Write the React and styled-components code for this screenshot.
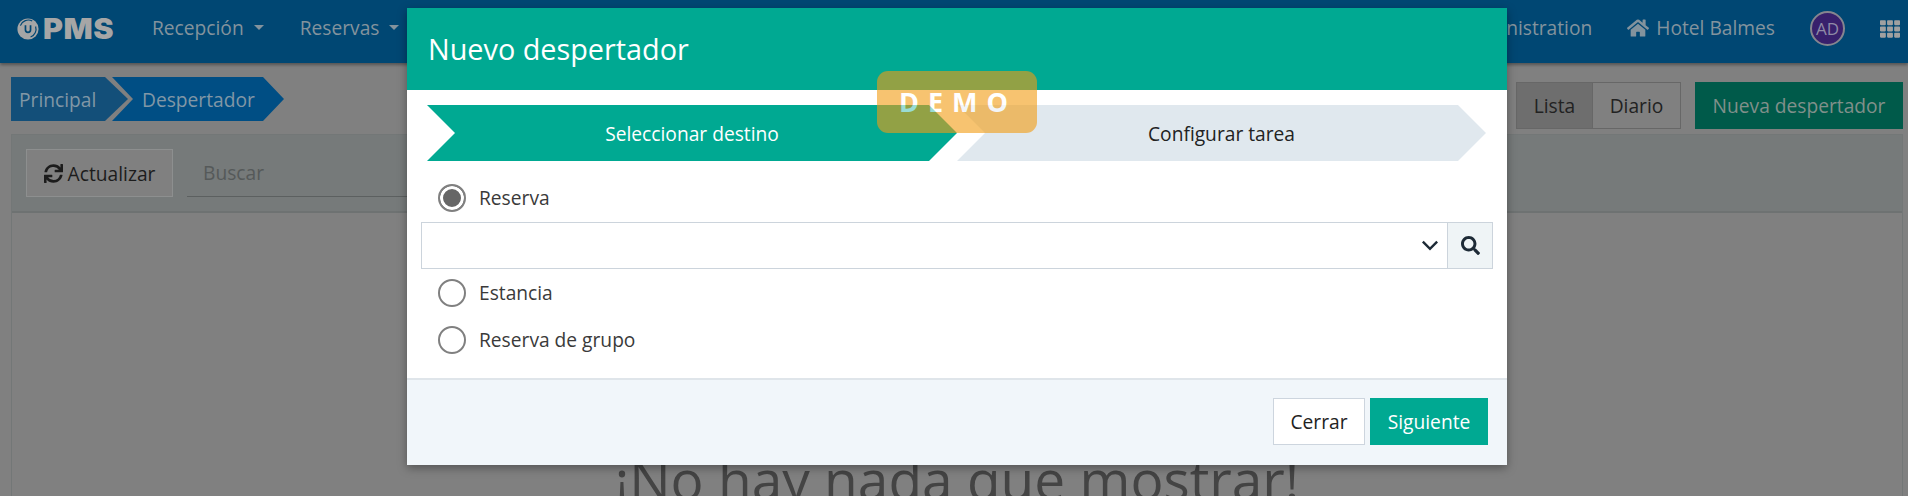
import React from "react";
import styled, { createGlobalStyle } from "styled-components";
import { FaSync, FaHome, FaTh, FaSearch } from "react-icons/fa";

const Global = createGlobalStyle`
  html, body { margin: 0; padding: 0; background: #808080; }
  body { font-family: "Open Sans", "Liberation Sans", sans-serif; font-size: 19.2px; color: #222; }
  * { box-sizing: border-box; }
`;

const Page = styled.div`
  position: relative;
  width: 1908px;
  height: 496px;
  overflow: hidden;
  background: #808080;
`;

const TopBar = styled.header`
  height: 63px;
  background: #004773;
  box-shadow: 0 2px 3px rgba(0, 0, 0, 0.35);
  display: flex;
  align-items: center;
  padding: 0 8px 6px 17px;
  color: #83939d;
`;

const Logo = styled.div`
  display: flex;
  align-items: center;
  gap: 4px;
  width: 135px;
  color: #a6a6a6;
`;

const LogoText = styled.span`
  display: inline-block;
  font-family: "Inter", "Open Sans", sans-serif;
  font-weight: 900;
  font-size: 28px;
  line-height: 1;
  letter-spacing: 0.5px;
  transform: scaleX(1.09);
  transform-origin: left center;
`;

const NavItem = styled.div`
  display: flex;
  align-items: center;
  gap: ${(p) => p.$gap || 10}px;
  margin-right: ${(p) => p.$mr || 0}px;
  margin-left: ${(p) => p.$ml || 0}px;
  margin-bottom: 2px;
`;

const Caret = styled.i`
  width: 0;
  height: 0;
  border-left: 5px solid transparent;
  border-right: 5px solid transparent;
  border-top: 5px solid #83939d;
`;

const Spacer = styled.div`
  flex: 1;
`;

const Avatar = styled.div`
  width: 35px;
  height: 35px;
  border-radius: 50%;
  background: #38206c;
  border: 2px solid #85858f;
  display: flex;
  align-items: center;
  justify-content: center;
  font-size: 17px;
  margin-left: 35px;
  color: #8f8aa6;
`;

const GridIcon = styled(FaTh)`
  width: 20px;
  height: 20px;
  margin-left: 35px;
  color: #a0a0a0;
`;

const Main = styled.main`
  padding: 14px 5px 0 11px;
`;

const HeadRow = styled.div`
  display: flex;
  align-items: flex-start;
  height: 57px;
`;

const Crumbs = styled.nav`
  display: flex;
  height: 44px;
`;

const Crumb = styled.div`
  height: 44px;
  display: flex;
  align-items: center;
  color: #8197a6;
  background: ${(p) => p.$bg};
  width: ${(p) => p.$w}px;
  margin-left: ${(p) => p.$ml || 0}px;
  padding-left: ${(p) => p.$pl}px;
  clip-path: ${(p) => p.$path};
`;

const ViewGroup = styled.div`
  margin: 5px 0 0 auto;
  display: flex;
  align-items: flex-start;
`;

const ViewButton = styled.div`
  height: 47px;
  width: ${(p) => p.$w}px;
  display: flex;
  align-items: center;
  justify-content: center;
  background: ${(p) => (p.$active ? "#6e6e6e" : "#808080")};
  border: 1px solid #676767;
  margin-left: ${(p) => (p.$joined ? "-1px" : "0")};
  color: #222;
`;

const PrimaryDim = styled.div`
  height: 47px;
  width: 208px;
  margin-left: 14px;
  background: #005a4a;
  color: #80908a;
  display: flex;
  align-items: center;
  justify-content: center;
`;

const Panel = styled.section`
  border: 1px solid #737777;
  height: 400px;
`;

const PanelBar = styled.div`
  height: 78px;
  background: #767a7a;
  border-bottom: 2px solid #6e7272;
  display: flex;
  align-items: center;
  padding: 0 15px 0 14px;
  gap: 14px;
`;

const RefreshButton = styled.div`
  width: 147px;
  height: 48px;
  border: 1px solid #8d8f8f;
  background: #808080;
  display: flex;
  align-items: center;
  justify-content: center;
  gap: 5px;
  color: #1c1c1c;
`;

const SearchField = styled.div`
  width: 900px;
  height: 48px;
  border-bottom: 1px solid #5c6060;
  padding-left: 16px;
  display: flex;
  align-items: center;
  color: #555959;
`;

const EmptyTitle = styled.h1`
  margin: 231px 0 0;
  font-weight: 400;
  font-size: 55px;
  line-height: 70px;
  text-align: center;
  color: #444;
`;

const Modal = styled.div`
  position: absolute;
  left: 407px;
  top: 8px;
  width: 1100px;
  height: 457px;
  background: #fff;
  box-shadow: 0 3px 9px rgba(0, 0, 0, 0.35);
  display: flex;
  flex-direction: column;
`;

const ModalHeader = styled.div`
  height: 82px;
  background: #00a992;
  color: #fff;
  font-size: 28.8px;
  display: flex;
  align-items: center;
  padding: 0 0 2px 21px;
`;

const Steps = styled.div`
  display: flex;
  margin: 15px 0 0 20px;
  height: 56px;
`;

const Step = styled.div`
  height: 56px;
  width: ${(p) => p.$w}px;
  background: ${(p) => (p.$active ? "#00a992" : "#e0e8ee")};
  color: ${(p) => (p.$active ? "#fff" : "#222")};
  display: flex;
  align-items: center;
  justify-content: center;
  clip-path: polygon(0 0, calc(100% - 28px) 0, 100% 50%, calc(100% - 28px) 100%, 0 100%, 28px 50%);
`;

const ModalBody = styled.div`
  flex: 1;
  padding: 16px 14px 0 14px;
`;

const RadioRow = styled.label`
  display: flex;
  align-items: center;
  height: ${(p) => p.$h || 47}px;
  margin-bottom: ${(p) => p.$mb || 0}px;
  padding-left: 17px;
  gap: 13px;
  color: #3a3a3a;
`;

const RadioDot = styled.span`
  width: 28px;
  height: 28px;
  border-radius: 50%;
  border: 2px solid #808080;
  background: ${(p) => (p.$on ? "#666" : "#fff")};
  box-shadow: ${(p) => (p.$on ? "inset 0 0 0 3px #fff" : "none")};
`;

const SelectRow = styled.div`
  display: flex;
  height: 47px;
  border: 1px solid #ccd4dc;
`;

const SelectField = styled.div`
  flex: 1;
  display: flex;
  align-items: center;
  justify-content: flex-end;
  padding-right: 8px;
  background: #fff;
`;

const SearchAddon = styled.div`
  width: 45px;
  border-left: 1px solid #ccd4dc;
  background: #eff4f6;
  display: flex;
  align-items: center;
  justify-content: center;
  color: #1d2a36;
`;

const ModalFooter = styled.div`
  height: 87px;
  border-top: 2px solid #dfe5ea;
  background: #f1f6fa;
  display: flex;
  align-items: flex-start;
  justify-content: flex-end;
  gap: 5px;
  padding: 18px 19px 0 0;
`;

const FooterButton = styled.div`
  height: 47px;
  width: ${(p) => p.$w}px;
  display: flex;
  align-items: center;
  justify-content: center;
  background: ${(p) => (p.$primary ? "#00a992" : "#fff")};
  color: ${(p) => (p.$primary ? "#fff" : "#222")};
  border: 1px solid ${(p) => (p.$primary ? "#00a992" : "#cdd5de")};
`;

const DemoBadge = styled.div`
  position: absolute;
  left: 877px;
  top: 71px;
  width: 160px;
  height: 62px;
  border-radius: 11px;
  background: #f39c12;
  opacity: 0.6;
  color: #fff;
  font-weight: 700;
  font-size: 27px;
  letter-spacing: 9px;
  padding: 0 0 2px 2px;
  display: flex;
  align-items: center;
  justify-content: center;
`;

const LogoMark = () => (
  <svg width="22" height="22" viewBox="0 0 26 26" aria-hidden="true">
    <circle cx="13" cy="13" r="12.5" fill="#a6a6a6" />
    <path d="M4 9 A10 10 0 0 1 18 3.5" fill="none" stroke="#004773" strokeWidth="1.4" />
    <path d="M22 10 A10 10 0 0 1 16 22.5" fill="none" stroke="#004773" strokeWidth="1.4" />
    <path d="M10 8.5 V14 a3 3 0 0 0 6 0 V8.5" fill="none" stroke="#004773" strokeWidth="2" />
  </svg>
);

const Chevron = () => (
  <svg width="18" height="11" viewBox="0 0 16 10" aria-hidden="true">
    <path d="M1.5 1.5 L8 8 L14.5 1.5" fill="none" stroke="#1d2a36" strokeWidth="2.2" />
  </svg>
);

export default function App() {
  return (
    <Page>
      <Global />
      <TopBar>
        <Logo>
          <LogoMark />
          <LogoText>PMS</LogoText>
        </Logo>
        <NavItem $mr={36}>Recepción <Caret /></NavItem>
        <NavItem>Reservas <Caret /></NavItem>
        <Spacer />
        <NavItem>Administration</NavItem>
        <NavItem $ml={35} $gap={7}><FaHome size={22} /> Hotel Balmes</NavItem>
        <Avatar>AD</Avatar>
        <GridIcon />
      </TopBar>
      <Main>
        <HeadRow>
          <Crumbs>
            <Crumb
              $bg="#134f79"
              $w={117}
              $pl={8}
              $path="polygon(0 0, 94px 0, 117px 50%, 94px 100%, 0 100%)"
            >
              Principal
            </Crumb>
            <Crumb
              $bg="#004e84"
              $w={172}
              $ml={-16}
              $pl={30}
              $path="polygon(0 0, 151px 0, 172px 50%, 151px 100%, 0 100%, 21px 50%)"
            >
              Despertador
            </Crumb>
          </Crumbs>
          <ViewGroup>
            <ViewButton $active $w={77}>Lista</ViewButton>
            <ViewButton $joined $w={89}>Diario</ViewButton>
            <PrimaryDim>Nueva despertador</PrimaryDim>
          </ViewGroup>
        </HeadRow>
        <Panel>
          <PanelBar>
            <RefreshButton><FaSync size={19} /> Actualizar</RefreshButton>
            <SearchField>Buscar</SearchField>
          </PanelBar>
          <EmptyTitle>¡No hay nada que mostrar!</EmptyTitle>
        </Panel>
      </Main>
      <Modal role="dialog">
        <ModalHeader>Nuevo despertador</ModalHeader>
        <Steps>
          <Step $active $w={530}>Seleccionar destino</Step>
          <Step $w={529}>Configurar tarea</Step>
        </Steps>
        <ModalBody>
          <RadioRow $h={41} $mb={4}><RadioDot $on /> Reserva</RadioRow>
          <SelectRow>
            <SelectField><Chevron /></SelectField>
            <SearchAddon><FaSearch size={19} /></SearchAddon>
          </SelectRow>
          <RadioRow><RadioDot /> Estancia</RadioRow>
          <RadioRow><RadioDot /> Reserva de grupo</RadioRow>
        </ModalBody>
        <ModalFooter>
          <FooterButton $w={92}>Cerrar</FooterButton>
          <FooterButton $primary $w={118}>Siguiente</FooterButton>
        </ModalFooter>
      </Modal>
      <DemoBadge>DEMO</DemoBadge>
    </Page>
  );
}
